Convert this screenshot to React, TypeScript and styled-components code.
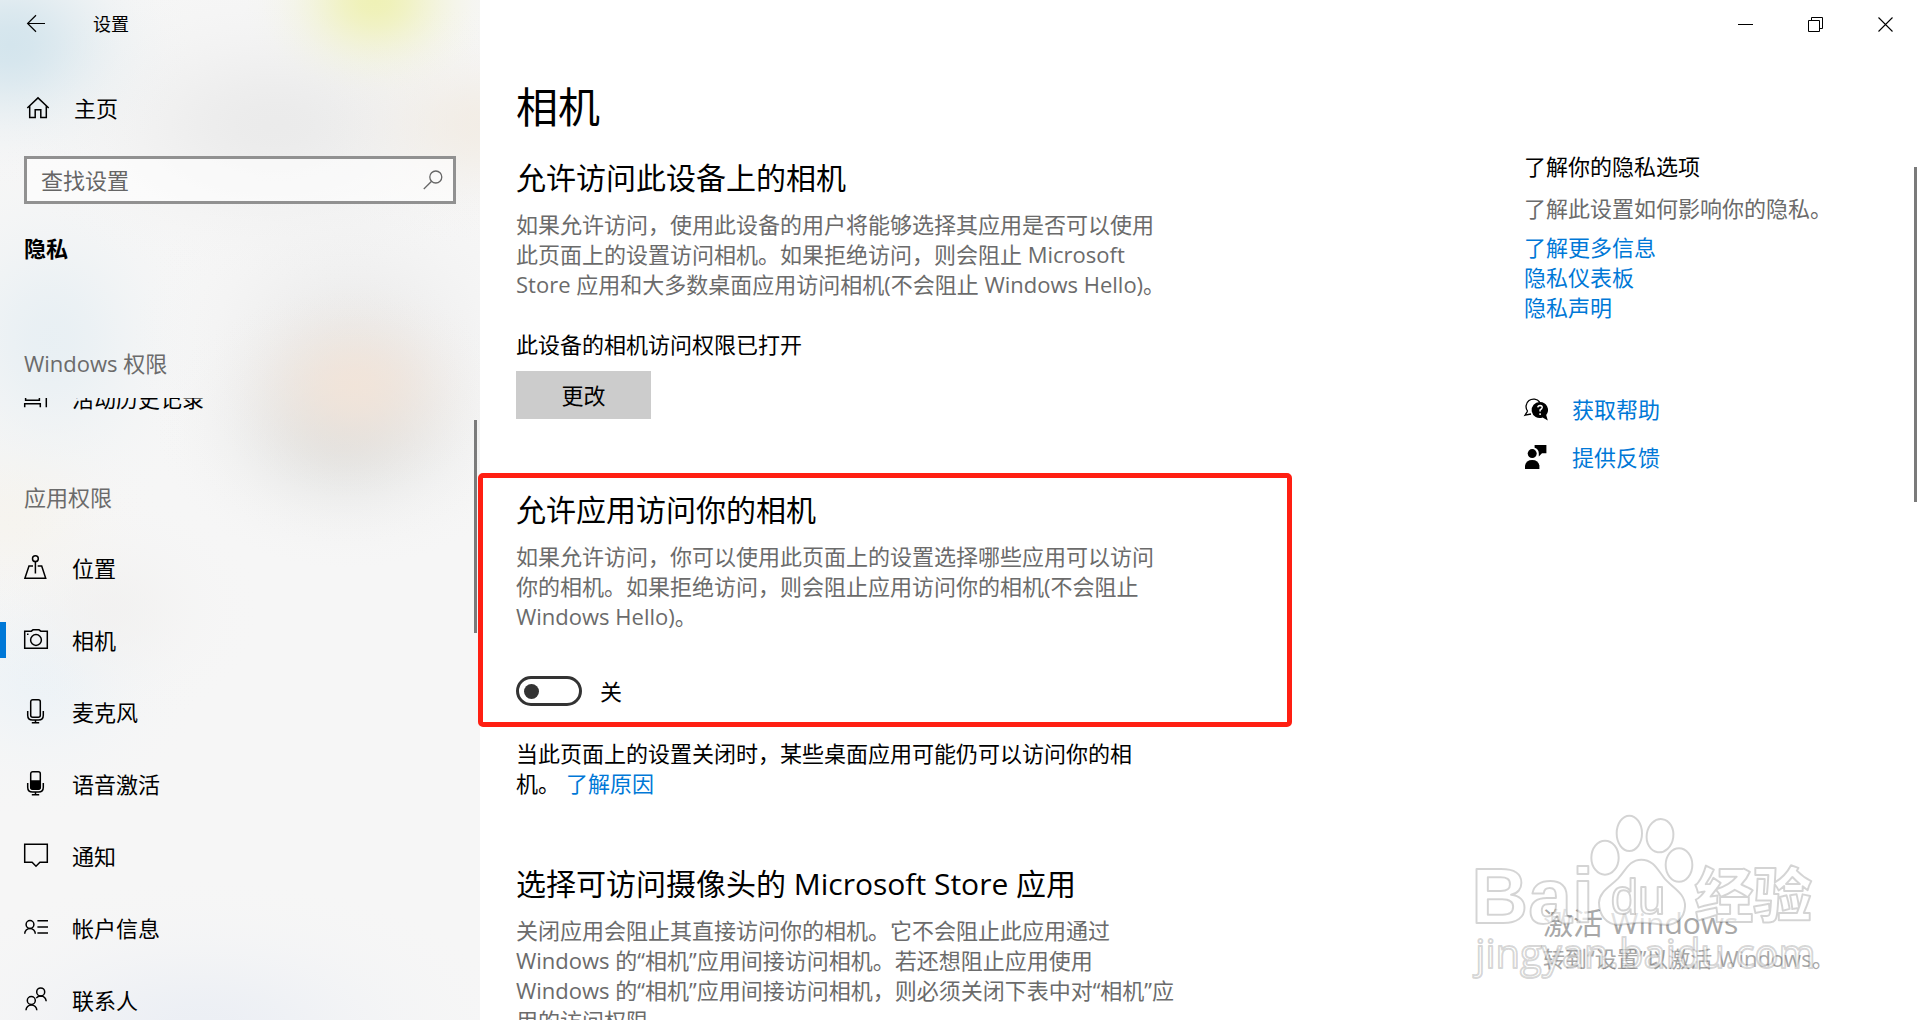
import React from "react";
import styled, { createGlobalStyle, css } from "styled-components";

const blue = "#0078d7";
const grey = "#6b6b6b";

/* A soft spot of colour with a bell-shaped falloff, for the acrylic sidebar. */
const glow = (x: number, y: number, rx: number, ry: number, rgb: string, alpha = 1) => {
  const stops = [1, 0.93, 0.76, 0.54, 0.34, 0.18, 0.08, 0.02, 0]
    .map((a, i) => `rgba(${rgb}, ${(a * alpha).toFixed(3)}) ${(i * 12.5).toFixed(1)}%`)
    .join(", ");
  return `radial-gradient(ellipse ${rx}px ${ry}px at ${x}px ${y}px, ${stops})`;
};

const acrylic = [
  glow(375, 0, 130, 105, "239, 241, 182"),
  glow(10, 45, 180, 140, "208, 227, 236", 0.9),
  glow(480, 125, 180, 120, "241, 234, 224", 0.7),
  glow(275, 125, 280, 160, "232, 232, 232", 0.8),
  glow(355, 385, 150, 115, "243, 228, 216", 0.85),
  glow(345, 430, 190, 140, "222, 222, 220", 0.85),
  glow(350, 350, 220, 200, "230, 230, 230", 0.7),
  glow(50, 340, 170, 200, "229, 238, 243", 0.8),
  glow(10, 515, 150, 130, "246, 243, 236", 0.7),
  glow(110, 610, 150, 120, "241, 240, 239", 0.7),
  glow(40, 680, 160, 140, "235, 242, 247", 0.8),
  glow(200, 1030, 320, 150, "233, 237, 244", 0.8),
].join(", ");

const GlobalStyle = createGlobalStyle`
  *, *::before, *::after { box-sizing: border-box; }
  body {
    margin: 0;
    background: #fff;
    color: #000;
    font-family: "Open Sans", "Noto Sans CJK SC", sans-serif;
    font-size: 22px;
    line-height: 30px;
  }
  button, input { font: inherit; color: inherit; }
  h1, h2, h3, p, ul { margin: 0; padding: 0; font-weight: 400; }
  a { color: ${blue}; text-decoration: none; }
`;

const Window = styled.div`
  display: grid;
  grid-template-columns: 480px minmax(0, 1fr);
  height: 100vh;
  overflow: hidden;
`;

/* ---------- sidebar ---------- */

const Sidebar = styled.aside`
  position: relative;
  display: flex;
  flex-direction: column;
  min-height: 0;
  background: ${acrylic}, #f6f6f6;
`;

const SidebarTitle = styled.div`
  display: flex;
  align-items: center;
  gap: 45px;
  height: 48px;
  padding-left: 24px;
  font-size: 18px;
`;

const BackButton = styled.button`
  display: flex;
  padding: 0;
  border: 0;
  background: none;
`;

const HomeLink = styled.a`
  display: flex;
  align-items: center;
  gap: 24px;
  height: 72px;
  margin-top: 24px;
  padding-left: 26px;
  color: #000;
`;

const SearchBox = styled.form`
  display: flex;
  align-items: center;
  height: 48px;
  margin: 12px 24px 0;
  padding: 0 10px 0 14px;
  border: 3px solid #919191;
  background: rgba(255, 255, 255, 0.6);
`;

const SearchInput = styled.input`
  flex: 1;
  min-width: 0;
  padding: 0;
  border: 0;
  outline: 0;
  background: none;
  &::placeholder { color: #666; opacity: 1; }
`;

const SearchButton = styled.button`
  display: flex;
  padding: 0;
  border: 0;
  background: none;
  color: #666;
`;

const SectionTitle = styled.h2`
  margin: 29px 24px 0;
  font-size: 22px;
  font-weight: 700;
`;

const GroupLabel = styled.h3`
  padding-left: 24px;
  font-size: 22px;
  color: ${grey};
`;

const FirstGroup = styled.div`
  margin-top: 85px;
`;

const NavViewport = styled.nav`
  flex: 1;
  min-height: 0;
  margin-top: 20px;
  overflow: hidden;
`;

const NavScrolled = styled.div`
  margin-top: -36px;
`;

const NavList = styled.ul`
  list-style: none;
`;

const AppGroup = styled.div`
  padding: 48px 0 20px;
`;

const NavLink = styled.a<{ $active?: boolean }>`
  display: flex;
  align-items: center;
  gap: 24px;
  height: 72px;
  padding-left: 24px;
  color: #000;
  ${(p) =>
    p.$active &&
    css`
      background: linear-gradient(${blue}, ${blue}) left center / 6px 36px no-repeat;
    `}
`;

const ScrollThumb = styled.div<{ $top: number; $height: number }>`
  position: absolute;
  top: ${(p) => p.$top}px;
  right: 3px;
  width: 3px;
  height: ${(p) => p.$height}px;
  background: #7a7a7a;
`;

/* ---------- main pane ---------- */

const Main = styled.main`
  position: relative;
  display: flex;
  flex-direction: column;
  min-width: 0;
  min-height: 0;
`;

const Caption = styled.div`
  display: flex;
  flex: none;
  justify-content: flex-end;
  height: 48px;
`;

const CaptionButton = styled.button`
  display: flex;
  align-items: center;
  justify-content: center;
  width: 70px;
  padding: 0;
  border: 0;
  background: none;
`;

const Columns = styled.div`
  display: grid;
  grid-template-columns: minmax(0, 1fr) 396px;
  padding-left: 36px;
`;

const Content = styled.div`
  padding-top: 31px;
`;

const PageTitle = styled.h1`
  margin-bottom: 23px;
  font-size: 42px;
  line-height: 56px;
`;

const Heading = styled.h2`
  margin-bottom: 11px;
  font-size: 30px;
  line-height: 40px;
`;

const Paragraph = styled.p<{ $muted?: boolean }>`
  color: ${(p) => (p.$muted ? grey : "#000")};
`;

const Status = styled.p`
  margin-top: 30px;
`;

const ChangeButton = styled.button`
  display: block;
  width: 135px;
  height: 48px;
  margin-top: 12px;
  padding: 0;
  border: 0;
  background: #ccc;
`;

const AppAccess = styled.section`
  position: relative;
  margin-top: 71px;
`;

const Marker = styled.div`
  position: absolute;
  top: -17px;
  bottom: -21px;
  left: -38px;
  width: 814px;
  border: 5px solid #ff1f12;
  border-radius: 5px;
  pointer-events: none;
`;

const ToggleRow = styled.label`
  display: flex;
  align-items: center;
  gap: 18px;
  margin-top: 45px;
`;

const Toggle = styled.input`
  appearance: none;
  display: flex;
  align-items: center;
  width: 66px;
  height: 30px;
  margin: 0;
  padding-left: 5px;
  border: 3px solid #333;
  border-radius: 15px;
  &::before {
    content: "";
    width: 15px;
    height: 15px;
    border-radius: 50%;
    background: #333;
  }
  &:checked { justify-content: flex-end; padding: 0 5px 0 0; }
`;

const Note = styled.div`
  margin-top: 32px;
`;

const NoteLink = styled.a`
  margin-left: 6px;
`;

const StoreApps = styled.section`
  margin-top: 66px;
`;

const Related = styled.aside`
  padding-top: 103px;
`;

const RelatedText = styled.p`
  margin: 12px 0 9px;
  color: ${grey};
`;

const LinkStack = styled.div`
  display: flex;
  flex-direction: column;
  align-items: flex-start;
`;

const SupportLinks = styled(LinkStack)`
  gap: 18px;
  margin-top: 72px;
`;

const SupportLink = styled.a`
  display: flex;
  align-items: center;
  gap: 24px;
  svg { color: #000; }
`;

/* ---------- desktop overlays ---------- */

const Activation = styled.div`
  position: absolute;
  right: 80px;
  bottom: 47px;
  width: 297px;
  color: #a8a8a8;
  white-space: nowrap;
  pointer-events: none;
`;

const ActivationTitle = styled.p`
  font-size: 30px;
  line-height: 40px;
`;

const Watermark = styled.svg`
  position: absolute;
  right: 80px;
  bottom: 40px;
  width: 370px;
  height: 170px;
  pointer-events: none;
`;

/* ---------- icons ---------- */

const Svg = styled.svg`
  flex: none;
  fill: none;
  stroke: currentColor;
  stroke-width: 1.5;
  overflow: visible;
`;

const Icon = ({ size = 24, children }: { size?: number; children: React.ReactNode }) => (
  <Svg width={size} height={size} viewBox={`0 0 ${size} ${size}`} aria-hidden="true">
    {children}
  </Svg>
);

const micBody = (
  <>
    <rect x="6.7" y="-0.2" width="9.6" height="17.4" rx="2" />
    <path d="M3.7 11v4.2q0 4.8 4.8 4.8h6q4.8 0 4.8-4.8V11M11.5 20v2.6M7.8 22.7h7.4" />
  </>
);

const icons = {
  history: (
    <path d="M0 11h4M13 11h4M1.6 11v3.2h13.8V11M.7 21.3v-3.6h15.6v3.6M22.3 8v13.3" />
  ),
  location: (
    <>
      <circle cx="11.4" cy="2.7" r="2.9" />
      <path d="M11.4 5.6v11.8M9 10H5L.9 22.2h20.8L17.7 10h-4" />
    </>
  ),
  camera: (
    <>
      <path d="M.7 3.2h6.6L9 1.8h6l1.8 1.4h6.5v17H.7z" />
      <circle cx="12" cy="12" r="5.4" />
      <path d="M3 6.2h1.5" />
    </>
  ),
  mic: micBody,
  voice: (
    <>
      {micBody}
      <path d="M7 9h9v5.5q0 2.5-2 2.5H9q-2 0-2-2.5z" fill="currentColor" />
    </>
  ),
  notify: <path d="M.7 .2h22.6v18h-7.4l-3.9 4-3.9-4H.7z" />,
  account: (
    <>
      <circle cx="6" cy="8.5" r="3.9" />
      <path d="M.7 17.7a5.3 5.3 0 0 1 10.6 0M13.4 4.7H24M13.4 10.9H24M13.4 17.1H24" />
    </>
  ),
  contacts: (
    <>
      <circle cx="7.3" cy="12.5" r="4" />
      <path d="M2 22.3a5.4 5.4 0 0 1 10.8 0" />
      <circle cx="16.7" cy="3.9" r="4" />
      <path d="M12.2 10.1Q14 7.9 16.7 7.9q5 .2 5.5 5.4" />
    </>
  ),
};

const navItems: { icon: keyof typeof icons; label: string; active?: boolean }[] = [
  { icon: "location", label: "位置" },
  { icon: "camera", label: "相机", active: true },
  { icon: "mic", label: "麦克风" },
  { icon: "voice", label: "语音激活" },
  { icon: "notify", label: "通知" },
  { icon: "account", label: "帐户信息" },
  { icon: "contacts", label: "联系人" },
];

const NavItem = ({ icon, label, active }: (typeof navItems)[number]) => (
  <li>
    <NavLink href="#" $active={active} aria-current={active ? "page" : undefined}>
      <Icon>{icons[icon]}</Icon>
      {label}
    </NavLink>
  </li>
);

const BaiduMark = () => (
  <Watermark viewBox="150 90 1110 510" aria-hidden="true">
    <g
      fill="#fff"
      fillOpacity="0.65"
      stroke="#000"
      strokeOpacity="0.17"
      strokeWidth="6"
      strokeLinejoin="round"
    >
      <text x="154" y="428" fontFamily="Liberation Sans, sans-serif" fontWeight="700" fontSize="236">
        Bai
      </text>
      <ellipse cx="555" cy="233" rx="41" ry="51" />
      <ellipse cx="628" cy="160" rx="38" ry="53" />
      <ellipse cx="720" cy="167" rx="40" ry="50" transform="rotate(8 720 167)" />
      <ellipse cx="777" cy="255" rx="40" ry="50" />
      <path d="M664 239C700 239 712 268 734 296C758 324 797 340 795 380C793 415 768 436 735 434C700 432 690 428 664 428C638 428 625 434 594 434C560 434 537 405 537 368C538 335 570 320 594 296C618 270 628 239 664 239Z" />
      <text x="572" y="402" fontFamily="Liberation Sans, sans-serif" fontSize="148">
        du
      </text>
      <text x="824" y="412" fontFamily="Noto Sans CJK SC, sans-serif" fontWeight="900" fontSize="176">
        经验
      </text>
      <text x="166" y="565" fontFamily="Open Sans, sans-serif" fontSize="120">
        jingyan.baidu.com
      </text>
    </g>
  </Watermark>
);

export default function App() {
  return (
    <>
      <GlobalStyle />
      <Window lang="zh-CN">
        <Sidebar>
          <SidebarTitle>
            <BackButton aria-label="返回">
              <Icon>
                <path d="M21 11.5H3.5M12 3.2L3.6 11.5L12 19.8" strokeWidth="1.2" />
              </Icon>
            </BackButton>
            <span>设置</span>
          </SidebarTitle>
          <HomeLink href="#">
            <Icon>
              <path d="M1.3 12L12 1.9L22.7 12M3.7 10.2v11.4h5.5v-7.8h5.6v7.8h5.5V10.2" />
            </Icon>
            主页
          </HomeLink>
          <SearchBox role="search">
            <SearchInput type="text" placeholder="查找设置" aria-label="查找设置" />
            <SearchButton type="button" aria-label="搜索">
              <Icon size={20}>
                <circle cx="12.8" cy="7" r="6" strokeWidth="1.3" />
                <path d="M8.6 11.2L.8 19" strokeWidth="1.3" />
              </Icon>
            </SearchButton>
          </SearchBox>
          <SectionTitle>隐私</SectionTitle>
          <FirstGroup>
            <GroupLabel>Windows 权限</GroupLabel>
          </FirstGroup>
          <NavViewport>
            <NavScrolled>
              <NavList>
                <NavItem icon="history" label="活动历史记录" />
              </NavList>
              <AppGroup>
                <GroupLabel>应用权限</GroupLabel>
              </AppGroup>
              <NavList>
                {navItems.map((item) => (
                  <NavItem key={item.label} {...item} />
                ))}
              </NavList>
            </NavScrolled>
          </NavViewport>
          <ScrollThumb $top={420} $height={213} />
        </Sidebar>

        <Main>
          <Caption>
            <CaptionButton aria-label="最小化">
              <Icon size={15}>
                <path d="M0 7.5h15" strokeWidth="1" shapeRendering="crispEdges" />
              </Icon>
            </CaptionButton>
            <CaptionButton aria-label="还原">
              <Icon size={15}>
                <path d="M.5 3.5h11v11H.5zM3.5 3.5v-3h11v11h-3" strokeWidth="1" />
              </Icon>
            </CaptionButton>
            <CaptionButton aria-label="关闭">
              <Icon size={15}>
                <path d="M.5 .5l14 14M14.5 .5l-14 14" strokeWidth="1.1" />
              </Icon>
            </CaptionButton>
          </Caption>

          <Columns>
            <Content>
              <PageTitle>相机</PageTitle>
              <section>
                <Heading>允许访问此设备上的相机</Heading>
                <Paragraph $muted>
                  如果允许访问，使用此设备的用户将能够选择其应用是否可以使用
                  <br />
                  此页面上的设置访问相机。如果拒绝访问，则会阻止 Microsoft
                  <br />
                  Store 应用和大多数桌面应用访问相机(不会阻止 Windows Hello)。
                </Paragraph>
                <Status>此设备的相机访问权限已打开</Status>
                <ChangeButton>更改</ChangeButton>
              </section>

              <AppAccess>
                <Heading>允许应用访问你的相机</Heading>
                <Paragraph $muted>
                  如果允许访问，你可以使用此页面上的设置选择哪些应用可以访问
                  <br />
                  你的相机。如果拒绝访问，则会阻止应用访问你的相机(不会阻止
                  <br />
                  Windows Hello)。
                </Paragraph>
                <ToggleRow>
                  <Toggle type="checkbox" role="switch" />关
                </ToggleRow>
                <Marker />
              </AppAccess>

              <Note>
                <Paragraph>
                  当此页面上的设置关闭时，某些桌面应用可能仍可以访问你的相
                  <br />
                  机。<NoteLink href="#">了解原因</NoteLink>
                </Paragraph>
              </Note>

              <StoreApps>
                <Heading>选择可访问摄像头的 Microsoft Store 应用</Heading>
                <Paragraph $muted>
                  关闭应用会阻止其直接访问你的相机。它不会阻止此应用通过
                  <br />
                  Windows 的“相机”应用间接访问相机。若还想阻止应用使用
                  <br />
                  Windows 的“相机”应用间接访问相机，则必须关闭下表中对“相机”应
                  <br />
                  用的访问权限。
                </Paragraph>
              </StoreApps>
            </Content>

            <Related>
              <p>了解你的隐私选项</p>
              <RelatedText>了解此设置如何影响你的隐私。</RelatedText>
              <LinkStack>
                <a href="#">了解更多信息</a>
                <a href="#">隐私仪表板</a>
                <a href="#">隐私声明</a>
              </LinkStack>
              <SupportLinks>
                <SupportLink href="#">
                  <Icon>
                    <path d="M3.6 14.2A7.4 7.4 0 1 1 15.6 5M3.6 14.2L1 18.2L7 17" strokeWidth="1.3" />
                    <path
                      d="M16 5a8 8 0 1 0 2.6 15.4L23.8 23.6L22.2 18A8 8 0 0 0 16 5z"
                      fill="currentColor"
                      stroke="none"
                    />
                    <path d="M13.8 10.4q.2-2 2.3-2 2.2.2 2.1 2-.2 1.4-2.1 2.6v1.6M16.1 16.2v1.8" stroke="#fff" />
                  </Icon>
                  获取帮助
                </SupportLink>
                <SupportLink href="#">
                  <Icon>
                    <g fill="currentColor" stroke="none">
                      <circle cx="8.2" cy="8.6" r="4.5" />
                      <path d="M1 24v-3.4Q2 15 8.2 15q6.2 0 7.2 5.6V24z" />
                      <path d="M10.6 0h11.8v8.2h-4.4l-3.2 3.2V8.2q-.2-4-4.2-5.4z" />
                    </g>
                  </Icon>
                  提供反馈
                </SupportLink>
              </SupportLinks>
            </Related>
          </Columns>

          <Activation>
            <ActivationTitle>激活 Windows</ActivationTitle>
            <p>转到“设置”以激活 Windows。</p>
          </Activation>
          <BaiduMark />
          <ScrollThumb $top={167} $height={335} />
        </Main>
      </Window>
    </>
  );
}
